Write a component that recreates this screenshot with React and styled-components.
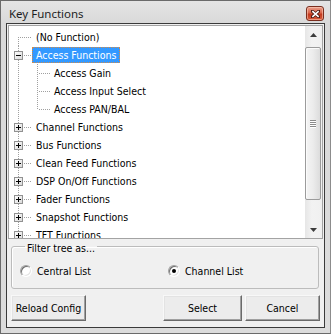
import React from 'react';
import styled, { createGlobalStyle } from 'styled-components';

const UI_FONT = `"DejaVu Sans Condensed", "DejaVu Sans", "Liberation Sans", sans-serif`;

const GlobalStyle = createGlobalStyle`
  html, body {
    margin: 0;
    padding: 0;
    background: #ffffff;
  }
`;

const treeItems = [
  { label: '(No Function)', level: 0, first: true },
  { label: 'Access Functions', level: 0, expander: 'minus', selected: true },
  { label: 'Access Gain', level: 1 },
  { label: 'Access Input Select', level: 1 },
  { label: 'Access PAN/BAL', level: 1, last: true },
  { label: 'Channel Functions', level: 0, expander: 'plus' },
  { label: 'Bus Functions', level: 0, expander: 'plus' },
  { label: 'Clean Feed Functions', level: 0, expander: 'plus' },
  { label: 'DSP On/Off Functions', level: 0, expander: 'plus' },
  { label: 'Fader Functions', level: 0, expander: 'plus' },
  { label: 'Snapshot Functions', level: 0, expander: 'plus' },
  { label: 'TFT Functions', level: 0, expander: 'plus' },
];

const LINE = '#a0a0a0';

// dotted connector lines + the little +/- box in front of each tree row
const Connector = ({ level, first, last, expander }) => {
  const width = level === 0 ? 23 : 41;
  return (
    <svg width={width} height="18" style={{ flexShrink: 0, display: 'block' }} shapeRendering="crispEdges">
      <line x1="9.5" y1={first ? 9 : 0} x2="9.5" y2="18" stroke={LINE} strokeDasharray="1 1" />
      {level === 1 && (
        <>
          <line x1="28.5" y1="0" x2="28.5" y2={last ? 10 : 18} stroke={LINE} strokeDasharray="1 1" />
          <line x1="30" y1="9.5" x2="41" y2="9.5" stroke={LINE} strokeDasharray="1 1" />
        </>
      )}
      {level === 0 && (
        <line x1={expander ? 15 : 11} y1="9.5" x2="23" y2="9.5" stroke={LINE} strokeDasharray="1 1" />
      )}
      {expander && (
        <>
          <defs>
            <linearGradient id="boxfill" x1="0" y1="0" x2="1" y2="1">
              <stop offset="0" stopColor="#ffffff" />
              <stop offset="1" stopColor="#d8d8d8" />
            </linearGradient>
          </defs>
          <rect x="5.5" y="5.5" width="8" height="8" fill="url(#boxfill)" stroke="#919191" />
          <line x1="7" y1="9.5" x2="12" y2="9.5" stroke="#000" />
          {expander === 'plus' && <line x1="9.5" y1="7" x2="9.5" y2="12" stroke="#000" />}
        </>
      )}
    </svg>
  );
};

const App = () => {
  return (
    <>
      <GlobalStyle />
      <Window>
        <TitleBar>
          <Title>Key Functions</Title>
          <CloseButton>
            <svg width="9" height="8" viewBox="0 0 9 8">
              <path d="M1 1 L8 7 M8 1 L1 7" stroke="#4a1a10" strokeWidth="3.2" strokeLinecap="square" />
              <path d="M1.3 1.2 L7.7 6.8 M7.7 1.2 L1.3 6.8" stroke="#ffffff" strokeWidth="1.6" />
            </svg>
          </CloseButton>
        </TitleBar>
        <Client>
          <Tree>
            <TreeList>
              {treeItems.map((item) => (
                <TreeRow key={item.label}>
                  <Connector {...item} />
                  <TreeLabel $selected={item.selected}>{item.label}</TreeLabel>
                </TreeRow>
              ))}
            </TreeList>
            <ScrollBar>
              <ScrollButton>
                <svg width="7" height="4"><path d="M0 4 L3.5 0 L7 4 Z" fill="#3c3c3c" /></svg>
              </ScrollButton>
              <ScrollTrack>
                <Thumb>
                  <Grip>
                    <span />
                    <span />
                    <span />
                    <span />
                  </Grip>
                </Thumb>
              </ScrollTrack>
              <ScrollButton>
                <svg width="7" height="4"><path d="M0 0 L7 0 L3.5 4 Z" fill="#3c3c3c" /></svg>
              </ScrollButton>
            </ScrollBar>
          </Tree>

          <GroupBox>
            <Legend>Filter tree as...</Legend>
            <RadioRow>
              <RadioOption $width={148}>
                <Radio />
                Central List
              </RadioOption>
              <RadioOption>
                <Radio $checked />
                Channel List
              </RadioOption>
            </RadioRow>
          </GroupBox>

          <ButtonRow>
            <Button $width={75}>Reload Config</Button>
            <Spacer />
            <Button $width={79}>Select</Button>
            <Button $width={75}>Cancel</Button>
          </ButtonRow>
        </Client>
      </Window>
    </>
  );
};

const Window = styled.div`
  box-sizing: border-box;
  width: 331px;
  height: 334px;
  border: 1px solid #6a6a6a;
  border-right-color: #8c8c8c;
  background: linear-gradient(180deg, #e4e4e4 0px, #d9d9d9 22px, #dcdcdc 100%);
  padding: 0 5px 5px 5px;
  display: flex;
  flex-direction: column;
`;

const TitleBar = styled.div`
  height: 22px;
  display: flex;
  align-items: center;
  justify-content: space-between;
  padding: 0 1px 0 3px;
`;

const Title = styled.span`
  font-family: "Noto Sans", "Open Sans", sans-serif;
  font-size: 11.5px;
  color: #1e1e1e;
  padding-top: 2px;
`;

const CloseButton = styled.div`
  box-sizing: border-box;
  width: 18px;
  height: 15px;
  margin-top: 3px;
  border: 1px solid #7a2e1f;
  border-radius: 3px;
  background: linear-gradient(180deg, #eaa08c 0%, #d9644a 45%, #c2391e 55%, #d65a3a 100%);
  box-shadow: inset 0 0 0 1px rgba(255, 210, 190, 0.55);
  display: flex;
  align-items: center;
  justify-content: center;
`;

const Client = styled.div`
  flex: 1;
  border: 1px solid #3a3a3a;
  background: #f0f0f0;
  display: flex;
  flex-direction: column;
  font-family: ${UI_FONT};
  font-size: 10.5px;
  color: #000;
`;

const Tree = styled.div`
  box-sizing: border-box;
  height: 214px;
  margin: 1px 1px 0 1px;
  border: 1px solid #a3a3a3;
  background: #ffffff;
  display: flex;
  overflow: hidden;
`;

const TreeList = styled.div`
  flex: 1;
  padding-top: 2px;
  overflow: hidden;
`;

const TreeRow = styled.div`
  display: flex;
  align-items: center;
  height: 18px;
`;

const TreeLabel = styled.span`
  box-sizing: border-box;
  height: 16px;
  line-height: 14px;
  padding: 0 3px;
  border: 1px ${(p) => (p.$selected ? 'dotted #d08a4a' : 'solid transparent')};
  background: ${(p) => (p.$selected ? '#3399ff' : 'transparent')};
  color: ${(p) => (p.$selected ? '#ffffff' : '#000000')};
  white-space: nowrap;
`;

const ScrollBar = styled.div`
  width: 17px;
  flex-shrink: 0;
  display: flex;
  flex-direction: column;
  background: linear-gradient(90deg, #e6e6e6 0%, #f2f2f2 40%, #f0f0f0 100%);
`;

const ScrollButton = styled.div`
  height: 17px;
  display: flex;
  align-items: center;
  justify-content: center;
`;

const ScrollTrack = styled.div`
  flex: 1;
  padding-top: 4px;
`;

const Thumb = styled.div`
  box-sizing: border-box;
  height: 153px;
  margin: 0 1px 0 0;
  border: 1px solid #9b9b9b;
  border-radius: 2px;
  background: linear-gradient(90deg, #f4f4f4 0%, #ececec 50%, #dcdcdc 100%);
  box-shadow: inset 1px 1px 0 #fbfbfb;
  display: flex;
  align-items: center;
  justify-content: center;
`;

const Grip = styled.div`
  display: flex;
  flex-direction: column;
  gap: 1px;

  span {
    display: block;
    width: 6px;
    height: 1px;
    background: #8a8a8a;
    box-shadow: 0 1px 0 #ffffff;
  }
`;

const GroupBox = styled.fieldset`
  margin: 1px 5px 0 4px;
  padding: 0 0 0 8px;
  border: 1px solid #bcbcbc;
  border-radius: 3px;
  box-shadow: inset 1px 1px 0 #ffffff;
`;

const Legend = styled.legend`
  margin-left: 5px;
  padding: 0 2px;
  line-height: 13px;
  position: relative;
  top: 2px;
`;

const RadioRow = styled.div`
  height: 35px;
  display: flex;
  align-items: center;
`;

const RadioOption = styled.label`
  display: flex;
  align-items: center;
  gap: 5px;
  width: ${(p) => (p.$width ? `${p.$width}px` : 'auto')};
`;

const Radio = styled.span`
  box-sizing: border-box;
  width: 12px;
  height: 12px;
  border-radius: 50%;
  border: 1px solid;
  border-color: #a0a0a0 #ffffff #ffffff #a0a0a0;
  box-shadow: inset 1px 1px 0 #6e6e6e, inset -1px -1px 0 #e3e3e3;
  background: #ffffff;
  display: flex;
  align-items: center;
  justify-content: center;

  &::after {
    content: '';
    width: 4px;
    height: 4px;
    border-radius: 50%;
    background: ${(p) => (p.$checked ? '#000000' : 'transparent')};
  }
`;

const ButtonRow = styled.div`
  display: flex;
  gap: 3px;
  margin: 6px 4px 0 4px;
`;

const Spacer = styled.div`
  flex: 1;
`;

const Button = styled.button`
  box-sizing: border-box;
  width: ${(p) => p.$width}px;
  height: 26px;
  padding: 0;
  font-family: ${UI_FONT};
  font-size: 10.5px;
  color: #000;
  background: #ececec;
  border: 1px solid;
  border-color: #f8f8f8 #6a6a6a #6a6a6a #f8f8f8;
  box-shadow: inset -1px -1px 0 #a0a0a0, inset 1px 1px 0 #e3e3e3;
`;

export default App;
